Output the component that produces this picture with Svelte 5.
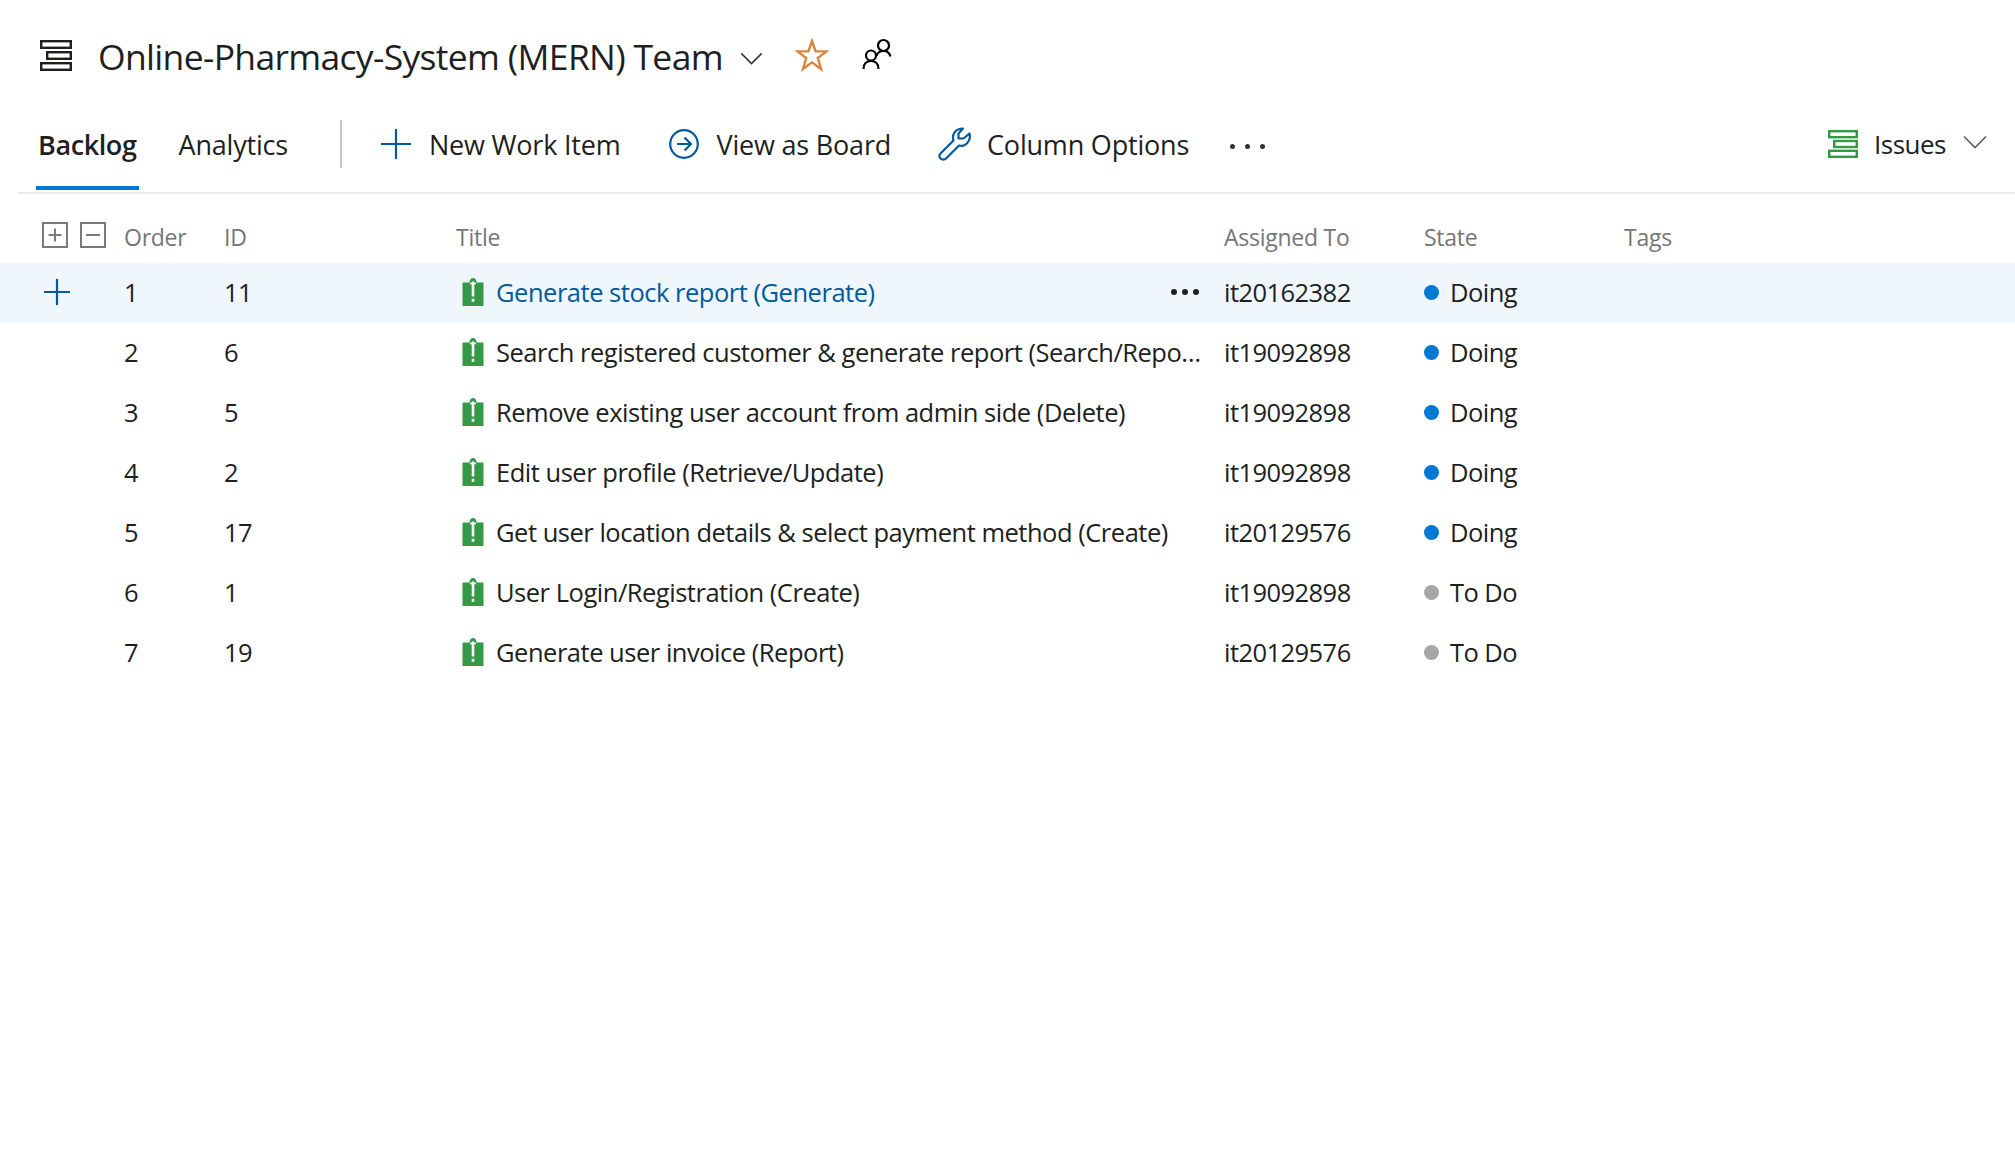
<script>
  const items = [
    { order: 1, id: 11, title: 'Generate stock report (Generate)', who: 'it20162382', state: 'Doing', hover: true },
    { order: 2, id: 6, title: 'Search registered customer & generate report (Search/Report)', who: 'it19092898', state: 'Doing' },
    { order: 3, id: 5, title: 'Remove existing user account from admin side (Delete)', who: 'it19092898', state: 'Doing' },
    { order: 4, id: 2, title: 'Edit user profile (Retrieve/Update)', who: 'it19092898', state: 'Doing' },
    { order: 5, id: 17, title: 'Get user location details & select payment method (Create)', who: 'it20129576', state: 'Doing' },
    { order: 6, id: 1, title: 'User Login/Registration (Create)', who: 'it19092898', state: 'To Do' },
    { order: 7, id: 19, title: 'Generate user invoice (Report)', who: 'it20129576', state: 'To Do' }
  ];
</script>

<div class="page">
  <header class="head">
    <svg class="backlog" viewBox="0 0 32 31" fill="none" stroke="#201f1e" stroke-width="2.4">
      <rect x="1.2" y="1.2" width="29.6" height="6.6" />
      <rect x="7.2" y="12.2" width="23.6" height="6.6" />
      <rect x="1.2" y="23.2" width="29.6" height="6.6" />
    </svg>
    <h1>Online-Pharmacy-System (MERN) Team</h1>
    <svg class="chev" viewBox="0 0 24 14" fill="none" stroke="#323130" stroke-width="1.6"><path d="M1 1.5 12 12.5 23 1.5" /></svg>
    <svg class="star" viewBox="0 0 34 34" fill="none" stroke="#d9843f" stroke-width="2.4" stroke-linejoin="miter"><path d="M17 3 20.6 13.4H31.6L22.8 20 26 31 17 24.4 8 31 11.2 20 2.4 13.4H13.4Z" /></svg>
    <svg class="people" viewBox="0 0 32 32" fill="none" stroke="#000" stroke-width="2.2">
      <circle cx="21.5" cy="7.5" r="5.5" />
      <path d="M14.5 18c1-3.5 3.5-5 7-5s6 1.5 7 5.5" />
      <circle cx="9" cy="17.5" r="5" />
      <path d="M1.5 31c0-5 3-8 7.5-8s7.5 3 7.5 8" />
    </svg>
  </header>

  <nav class="bar">
    <span class="tab active">Backlog</span>
    <span class="tab">Analytics</span>
    <span class="sep"></span>
    <span class="cmd first">
      <svg class="i30" viewBox="0 0 30 30" stroke="#005a9e" stroke-width="2.2" fill="none"><path d="M15 0V30M0 15H30" /></svg>
      New Work Item
    </span>
    <span class="cmd">
      <svg class="i30" viewBox="0 0 30 30" stroke="#005a9e" stroke-width="2.2" fill="none"><circle cx="15" cy="15" r="13.8" /><path d="M8 15H22M15.5 8.5 22 15l-6.5 6.5" /></svg>
      View as Board
    </span>
    <span class="cmd tight">
      <svg class="wrench" viewBox="0 0 34 34" stroke="#005a9e" stroke-width="2.2" fill="none" stroke-linejoin="round"><path d="M2.5 26.5 15.5 13.5C13.8 8.5 16.5 1.5 25 1.5L20.5 6.5V11.5H25.5L31.5 6.5C33.5 13.5 27.5 20.5 21 18.5L8 31.5C6.5 33 4 33 2.5 31.5 1 30 1 28 2.5 26.5Z" /></svg>
      Column Options
    </span>
    <span class="more">
      <i></i><i></i><i></i>
    </span>
    <span class="issues">
      <svg class="issues-i" viewBox="0 0 30 28" fill="none" stroke="#339947" stroke-width="2.4">
        <rect x="1.2" y="1.2" width="27.6" height="6" />
        <rect x="6.2" y="11" width="22.6" height="6" />
        <rect x="1.2" y="20.8" width="27.6" height="6" />
      </svg>
      <span class="issues-t">Issues</span>
      <svg class="chev2" viewBox="0 0 24 14" fill="none" stroke="#605e5c" stroke-width="1.6"><path d="M1 1.5 12 12.5 23 1.5" /></svg>
    </span>
  </nav>

  <div class="grid thead">
    <div class="tools">
      <svg class="box" viewBox="0 0 26 26" fill="none" stroke="#7a7a7a" stroke-width="2"><rect x="1" y="1" width="24" height="24" /><path d="M6.5 13H19.5M13 6.5V19.5" /></svg>
      <svg class="box" viewBox="0 0 26 26" fill="none" stroke="#7a7a7a" stroke-width="2"><rect x="1" y="1" width="24" height="24" /><path d="M6 13H20" /></svg>
    </div>
    <div>Order</div>
    <div>ID</div>
    <div>Title</div>
    <div>Assigned To</div>
    <div>State</div>
    <div>Tags</div>
  </div>

  {#each items as it}
    <div class="grid row" class:hover={it.hover}>
      <div class="tools add">
        {#if it.hover}
          <svg class="plus" viewBox="0 0 26 26" stroke="#005a9e" stroke-width="2.2" fill="none"><path d="M13 0V26M0 13H26" /></svg>
        {/if}
      </div>
      <div>{it.order}</div>
      <div>{it.id}</div>
      <div class="title">
        <svg class="wi" viewBox="0 0 22 28" aria-hidden="true">
          <path d="M7.5 4.5C7.5 1.5 9 0 11 0s3.5 1.5 3.5 4.5H21.5V28H.5V4.5Z" fill="#339947" />
          <path d="M8 5.5H14" stroke="#fff" stroke-width="1.6" />
          <path d="M11 3.5V18.5" stroke="#fff" stroke-width="2.6" />
          <rect x="9.7" y="20.8" width="2.6" height="3" fill="#fff" />
        </svg>
        <span class="tt" class:link={it.hover}>{it.title}</span>
        {#if it.hover}
          <span class="dots"><i></i><i></i><i></i></span>
        {/if}
      </div>
      <div>{it.who}</div>
      <div class="state">
        <span class="dot" class:todo={it.state === 'To Do'}></span>
        {it.state}
      </div>
      <div></div>
    </div>
  {/each}
</div>

<style>
  :global(body) {
    margin: 0;
    background: #fff;
  }
  .page {
    width: 2015px;
    height: 1152px;
    overflow: hidden;
    font-family: "Open Sans", "Noto Sans", sans-serif;
    color: #201f1e;
    font-size: 25.5px;
    letter-spacing: -0.55px;
  }
  .head {
    height: 112px;
    display: flex;
    align-items: center;
    padding-left: 40px;
  }
  .backlog { width: 32px; height: 31px; margin-top: -1px; }
  h1 {
    margin: 0 0 0 26px;
    font-size: 35.5px;
    font-weight: 400;
    letter-spacing: -0.68px;
    white-space: nowrap;
    width: 642px;
  }
  .chev { width: 23px; height: 13px; margin-top: 4px; }
  .star { width: 34px; height: 34px; margin: -2px 0 0 32px; }
  .people { width: 32px; height: 32px; margin: -4px 0 0 33px; }

  .bar {
    height: 80px;
    margin-left: 18px;
    border-bottom: 2px solid #eaeaea;
    display: flex;
    align-items: center;
    font-size: 27px;
    letter-spacing: -0.2px;
  }
  .tab {
    height: 80px;
    line-height: 66px;
    padding: 0 2px;
    box-sizing: border-box;
    white-space: nowrap;
  }
  .tab.active {
    font-weight: 600;
    border-bottom: 4px solid #0078d4;
    margin: 0 38px 2px 18px;
    height: 78px;
    letter-spacing: -0.4px;
  }
  .sep {
    width: 2px;
    height: 48px;
    background: #c8c8c8;
    margin: -16px 0 0 50px;
  }
  .cmd {
    display: inline-flex;
    align-items: center;
    gap: 18px;
    margin-left: 48px;
    margin-top: -16px;
    white-space: nowrap;
  }
  .cmd.first { margin-left: 39px; }
  .cmd.tight { gap: 15px; margin-left: 47px; }
  .i30 { width: 30px; height: 30px; flex: none; }
  .wrench { width: 34px; height: 34px; flex: none; }
  .more {
    display: inline-flex;
    gap: 10px;
    margin: -12px 0 0 41px;
  }
  .more i {
    display: block;
    width: 5px;
    height: 5px;
    border-radius: 50%;
    background: #323130;
  }
  .issues {
    margin-left: auto;
    margin-top: -16px;
    margin-right: 28px;
    display: inline-flex;
    align-items: center;
  }
  .issues-i { width: 30px; height: 28px; }
  .issues-t { margin-left: 16px; font-size: 26px; letter-spacing: -0.5px; }
  .chev2 { width: 24px; height: 14px; margin-left: 17px; margin-top: -4px; }

  .grid {
    display: grid;
    grid-template-columns: 124px 100px 232px 768px 200px 200px 1fr;
    align-items: center;
    box-sizing: border-box;
  }
  .thead {
    height: 69px;
    padding-top: 16px;
    color: #767676;
    font-size: 23px;
    letter-spacing: -0.25px;
  }
  .tools {
    display: flex;
    gap: 12px;
    padding-left: 42px;
    margin-top: -4px;
  }
  .box { width: 26px; height: 26px; }
  .row { height: 60px; padding-bottom: 3px; }
  .row.hover { background: #eff6fc; }
  .add { padding-left: 44px; margin-top: 0; }
  .plus { width: 26px; height: 26px; }
  .title {
    display: flex;
    align-items: center;
    padding-left: 6px;
    padding-right: 20px;
    min-width: 0;
    position: relative;
  }
  .wi { width: 22px; height: 28px; flex: none; margin-right: 12px; }
  .tt {
    white-space: nowrap;
    overflow: hidden;
    text-overflow: ellipsis;
    min-width: 0;
    letter-spacing: -0.48px;
  }
  .tt.link { color: #005a9e; }
  .dots {
    position: absolute;
    right: 25px;
    top: 50%;
    display: flex;
    gap: 5px;
    margin-top: -3px;
  }
  .dots i {
    display: block;
    width: 6px;
    height: 6px;
    border-radius: 50%;
    background: #201f1e;
  }
  .state { display: flex; align-items: center; gap: 11px; }
  .dot {
    width: 15px;
    height: 15px;
    margin-top: 2px;
    border-radius: 50%;
    background: #0078d4;
  }
  .dot.todo { background: #a6a6a6; }
</style>
